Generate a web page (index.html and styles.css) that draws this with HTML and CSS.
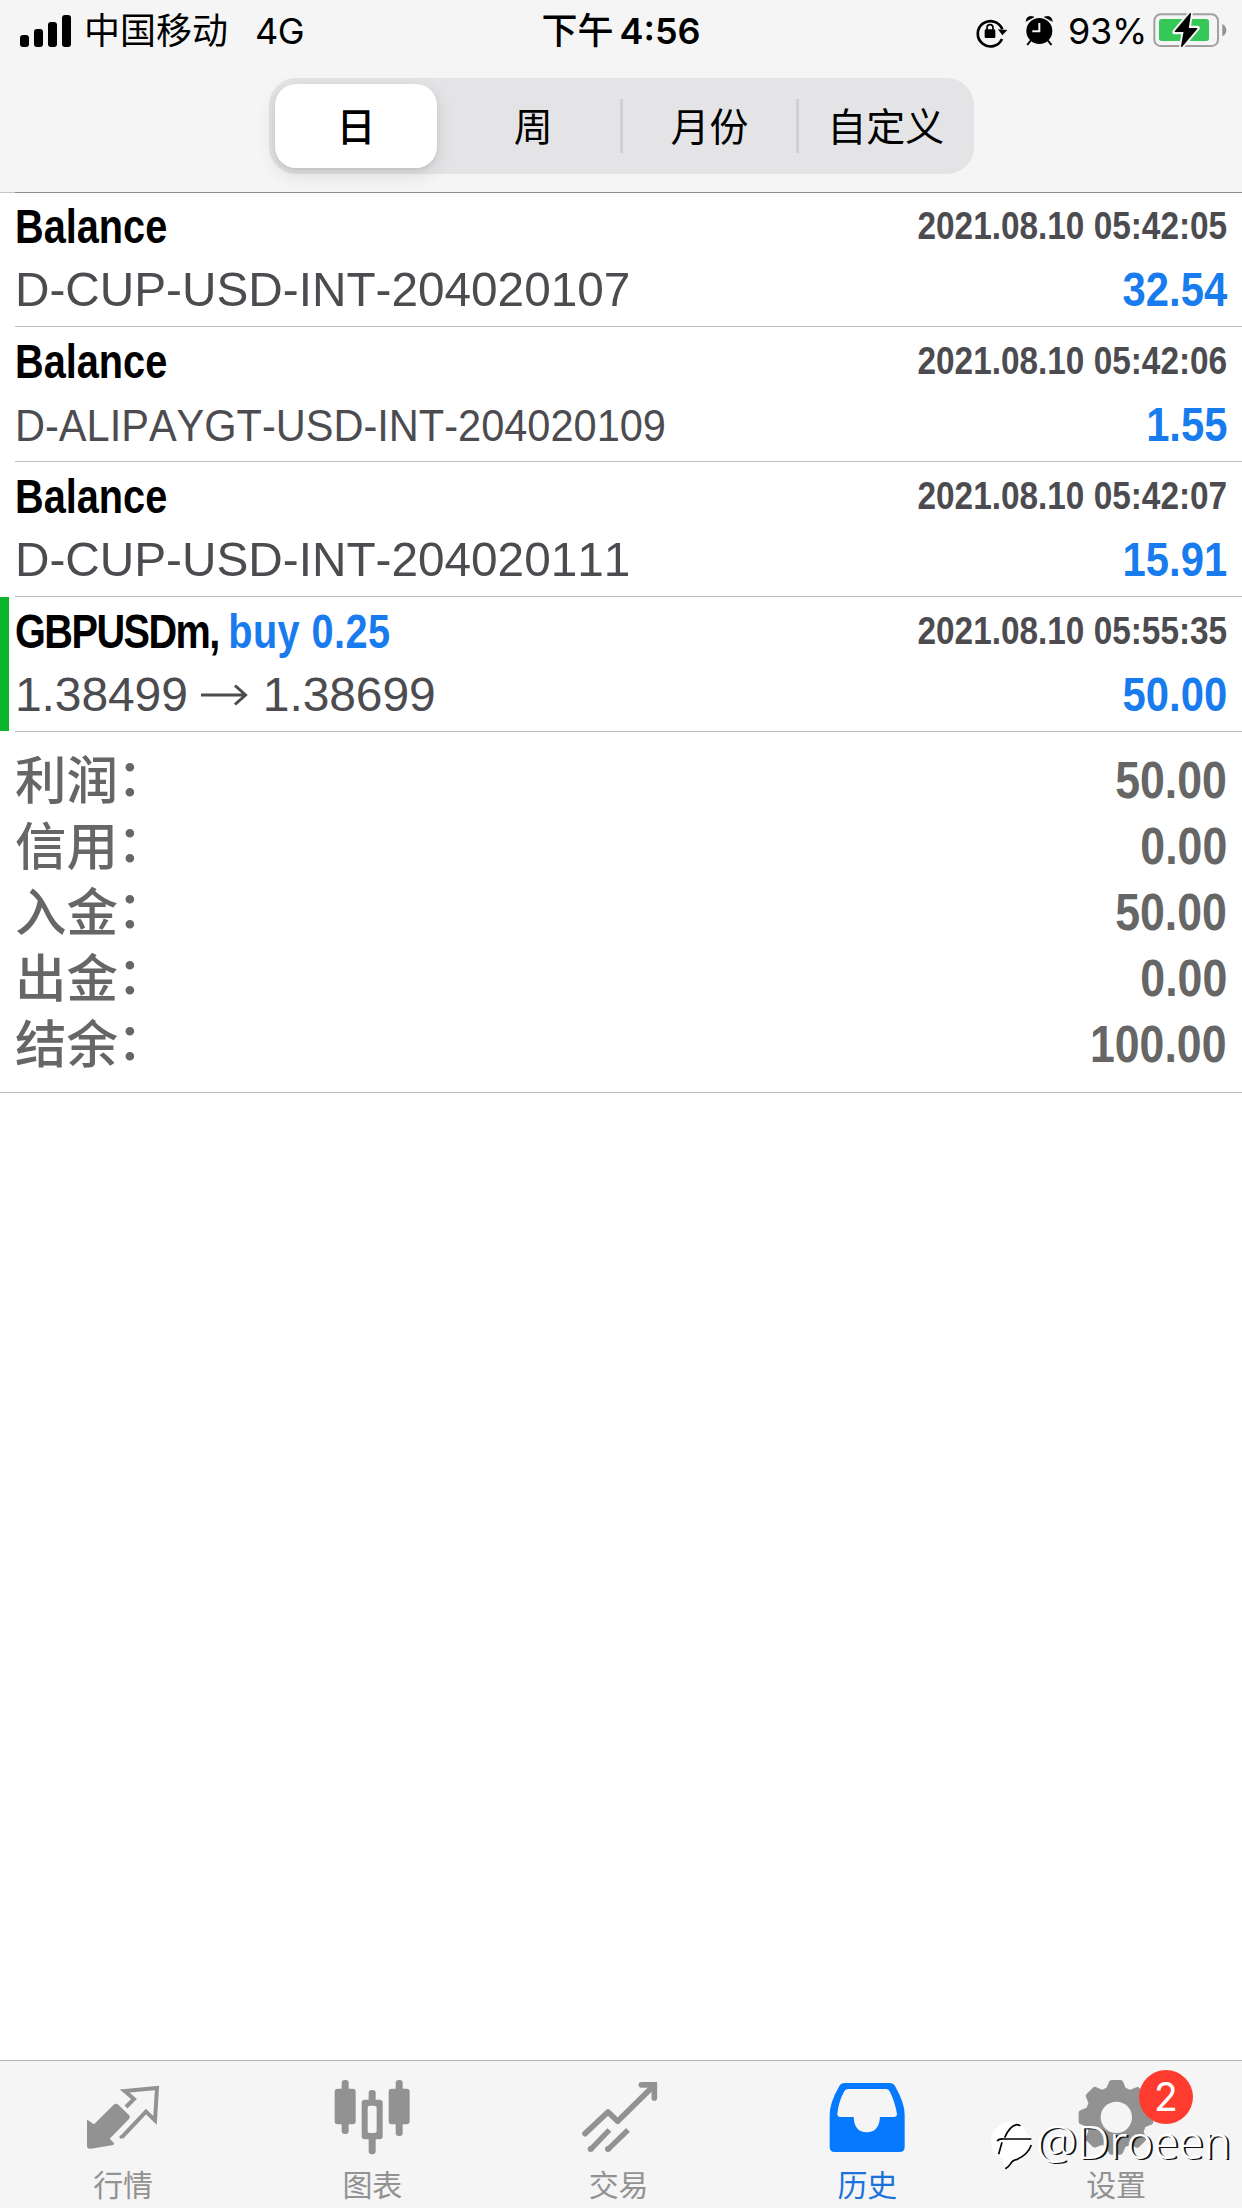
FILE: index.html
```html
<!DOCTYPE html>
<html lang="zh-CN">
<head>
<meta charset="utf-8">
<title>历史</title>
<link rel="stylesheet" href="styles.css">
</head>
<body>
<div class="screen">
  <header class="header">
    <div class="status">
      <div class="status-left">
        <svg class="signal" viewBox="0 0 51 32"><rect x="0" y="20" width="9" height="12" rx="3"/><rect x="14" y="14" width="9" height="18" rx="3"/><rect x="28" y="7" width="9" height="25" rx="3"/><rect x="42" y="0" width="9" height="32" rx="3"/></svg>
        <span class="carrier">中国移动</span>
        <span class="network">4G</span>
      </div>
      <div class="time">下午<span class="clock">4:56</span></div>
      <div class="status-right">
        <svg class="ic-lock" viewBox="405 39 99 108">
          <path d="M486 117A38 38 0 1 1 487 88" fill="none" stroke="#000" stroke-width="8"/>
          <path d="M474 88L502 90L487 106Z"/>
          <rect x="434" y="88" width="32" height="26" rx="4"/>
          <path d="M441 90V83a9 9 0 0 1 18 0V90" fill="none" stroke="#000" stroke-width="5"/>
        </svg>
        <svg class="ic-alarm" viewBox="555 39 84 108">
          <circle cx="598" cy="93" r="39"/>
          <path d="M558 64Q559 51 571 49L582 51Z M637 64Q636 51 624 49L613 51Z" stroke="#000" stroke-width="2" stroke-linejoin="round"/>
          <path d="M571 123L563 133M625 123L633 133" stroke="#000" stroke-width="6" stroke-linecap="round"/>
          <path d="M598 69V94H577" fill="none" stroke="#f5f5f5" stroke-width="6"/>
        </svg>
        <span class="percent">93%</span>
        <svg class="ic-battery" viewBox="939 39 222 108">
          <rect x="943" y="43" width="191" height="95" rx="19" fill="none" stroke="#a0a0a1" stroke-width="6"/>
          <path d="M1147 72q12 7 12 19t-12 18z" fill="#939394"/>
          <rect x="957" y="57" width="150" height="66" rx="8" fill="#35c859"/>
          <path d="M1052 38L1003 96H1031L1024 142L1073 84H1046Z" stroke="#f5f5f5" stroke-width="13" stroke-linejoin="round"/>
          <path d="M1051 41L1006 94H1033L1025 139L1070 86H1044Z" stroke="#000" stroke-width="4" stroke-linejoin="round"/>
        </svg>
      </div>
    </div>
    <nav class="segments">
      <span class="segment active">日</span>
      <span class="segment">周</span>
      <span class="segment split">月份</span>
      <span class="segment split">自定义</span>
    </nav>
  </header>

  <main class="list">
    <div class="row first">
      <span class="title">Balance</span><span class="date">2021.08.10 05:42:05</span>
      <span class="detail">D-CUP-USD-INT-204020107</span><span class="amount">32.54</span>
    </div>
    <div class="row">
      <span class="title">Balance</span><span class="date">2021.08.10 05:42:06</span>
      <span class="detail small">D-ALIPAYGT-USD-INT-204020109</span><span class="amount">1.55</span>
    </div>
    <div class="row">
      <span class="title">Balance</span><span class="date">2021.08.10 05:42:07</span>
      <span class="detail">D-CUP-USD-INT-204020111</span><span class="amount">15.91</span>
    </div>
    <div class="row trade">
      <span class="title"><span class="symbol">GBPUSDm, </span><span class="side">buy 0.25</span></span><span class="date">2021.08.10 05:55:35</span>
      <span class="prices">1.38499<svg class="arrow" viewBox="0 0 46 22"><path d="M0 11H44M34 1.5L44.5 11L34 20.5"/></svg>1.38699</span><span class="amount">50.00</span>
    </div>
    <section class="summary">
      <div class="sum"><span class="label">利润<span class="colon">：</span></span><span class="value">50.00</span></div>
      <div class="sum"><span class="label">信用<span class="colon">：</span></span><span class="value">0.00</span></div>
      <div class="sum"><span class="label">入金<span class="colon">：</span></span><span class="value">50.00</span></div>
      <div class="sum"><span class="label">出金<span class="colon">：</span></span><span class="value">0.00</span></div>
      <div class="sum"><span class="label">结余<span class="colon">：</span></span><span class="value">100.00</span></div>
    </section>
  </main>

  <footer class="tabs">
    <div class="tab">
      <svg class="tab-icon" viewBox="129 81 240 240">
        <path d="M141 212Q141 208 144 211L162 223L221 164Q228 158 235 164L267 195Q272 201 267 207L209 266L221 278Q224 284 216 286L152 296Q141 297 141 288Z"/>
        <path d="M258 171L282 147L254 123L351 114L345 211L318 185L245 262" fill="none" stroke="#929292" stroke-width="12"/>
        <circle cx="243" cy="261" r="5"/>
      </svg>
      <span class="tab-label">行情</span>
    </div>
    <div class="tab charts">
      <svg class="tab-icon" viewBox="877 81 240 240">
        <rect x="885" y="116" width="63" height="107" rx="9"/><rect x="906" y="90" width="21" height="162" rx="9"/>
        <rect x="1047" y="116" width="63" height="107" rx="9"/><rect x="1068" y="90" width="21" height="168" rx="9"/>
        <rect x="966" y="149" width="63" height="119" rx="9"/><rect x="987" y="120" width="21" height="193" rx="9"/>
        <rect x="984" y="167" width="27" height="82" rx="7" fill="#f5f5f5"/>
      </svg>
      <span class="tab-label">图表</span>
    </div>
    <div class="tab trading">
      <svg class="tab-icon" viewBox="116 81 240 240">
        <path d="M134 251L203 186L232 214L340 107" fill="none" stroke="#929292" stroke-width="17" stroke-linecap="round" stroke-linejoin="round"/>
        <path d="M303 104.500H342V144" fill="none" stroke="#929292" stroke-width="17" stroke-linecap="round"/>
        <path d="M151 298L207 240M203 298L263 240" fill="none" stroke="#929292" stroke-width="16"/>
        <circle cx="151" cy="297" r="9"/><circle cx="203" cy="297" r="9"/>
      </svg>
      <span class="tab-label">交易</span>
    </div>
    <div class="tab current">
      <svg class="tab-icon" viewBox="862 81 240 240">
        <path fill-rule="evenodd" d="M915 99H1050Q1061 99 1066 108Q1095 158 1095 195V291Q1095 306 1080 306H885Q870 306 870 291V195Q870 158 899 108Q904 99 915 99ZM925 117Q918 117 914 124Q896 156 893 192Q893 201 902 201H942Q944 247 981 247Q1018 247 1021 201H1062Q1072 201 1072 192Q1066 156 1050 124Q1046 117 1039 117Z"/>
      </svg>
      <span class="tab-label">历史</span>
    </div>
    <div class="tab">
      <svg class="tab-icon" viewBox="403 81 240 240">
        <defs><path id="tooth" d="M510 98H537L549 128H497Z" stroke="#929292" stroke-width="16" stroke-linejoin="round"/></defs>
        <circle cx="523" cy="202" r="93"/>
        <use href="#tooth"/><use href="#tooth" transform="rotate(45 523 202)"/><use href="#tooth" transform="rotate(90 523 202)"/><use href="#tooth" transform="rotate(135 523 202)"/><use href="#tooth" transform="rotate(180 523 202)"/><use href="#tooth" transform="rotate(225 523 202)"/><use href="#tooth" transform="rotate(270 523 202)"/><use href="#tooth" transform="rotate(315 523 202)"/>
        <circle cx="524" cy="202" r="47" fill="#f5f5f5"/>
      </svg>
      <span class="badge">2</span>
      <span class="tab-label">设置</span>
    </div>
    <div class="watermark">
      <svg class="mark" viewBox="141 206 135 156">
        <path d="M235 221A60 59 0 0 0 148 280Q150 312 180 324L190 354Q205 343 232 330Q268 312 268 268Z" fill="#fff"/>
        <path d="M165 272Q172 264 186 266H268M188 262Q202 228 224 223Q232 223 235 227M180 276L170 312" fill="none" stroke="#000" stroke-width="5"/>
        <path d="M268 284Q258 312 226 327Q210 330 206 340Q200 350 190 355" fill="none" stroke="#000" stroke-width="5"/>
      </svg>
      <span class="handle">@Droeen</span>
    </div>
  </footer>
</div>
</body>
</html>
```
FILE: styles.css
```css
* { box-sizing: border-box; }
body { margin: 0; background: #fff; }
svg { display: block; flex: none; overflow: visible; }

.screen {
  width: 1242px;
  height: 2208px;
  display: flex;
  flex-direction: column;
  font-family: Inter, "Noto Sans CJK SC", sans-serif;
  color: #000;
}

.header {
  height: 193px;
  background: #f5f5f5;
  border-bottom: 1px solid #c4c4c4;
}

.status {
  display: grid;
  grid-template-columns: 1fr auto 1fr;
  height: 62px;
  line-height: 63px;
  font-size: 36px;
  white-space: nowrap;
}
.status-left, .status-right { display: flex; align-items: center; }
.status-left { padding-left: 20px; }
.status-right { justify-content: flex-end; padding-right: 15px; }
.signal { width: 51px; height: 32px; margin: -2px 13px 0 0; }
.network { margin-left: 27px; letter-spacing: -0.5px; }
.time { font-weight: 500; }
.clock { font-weight: 600; margin-left: 6px; }
.ic-lock { width: 33px; height: 36px; margin: -1px 17px 0 0; }
.ic-alarm { width: 28px; height: 36px; margin: -1px 15px 0 0; }
.percent { margin-right: 6px; letter-spacing: -0.3px; }
.ic-battery { width: 74px; height: 36px; margin-top: -1px; }

.segments {
  display: grid;
  grid-template-columns: repeat(4, 1fr);
  width: 705px;
  height: 96px;
  margin: 16px 0 0 269px;
  border-radius: 27px;
  background: #e4e4e6;
  font-size: 39px;
}
.segment {
  display: flex;
  align-items: center;
  justify-content: center;
  padding-bottom: 5px;
}
.segment.active {
  margin: 6px 8px 6px 6px;
  border-radius: 21px;
  background: #fff;
  font-weight: 500;
  box-shadow: 0 6px 18px rgba(0, 0, 0, .12), 0 2px 4px rgba(0, 0, 0, .06);
}
.segment.split {
  margin-left: -2px;
  padding-left: 2px;
  background: linear-gradient(#cfcfd2, #cfcfd2) 0 50% / 3px 54px no-repeat;
}

.list {
  flex: 1;
  margin-top: -1px;
  font-family: "Liberation Sans", sans-serif;
  font-kerning: none;
}
.row {
  position: relative;
  display: grid;
  grid-template-columns: auto auto;
  grid-auto-rows: 60px;
  row-gap: 4px;
  align-content: end;
  justify-content: space-between;
  height: 135px;
  margin-left: 15px;
  padding: 0 15px 6px 0;
  border-bottom: 1px solid #bcbcbe;
  line-height: 60px;
  white-space: pre;
}
.row.first { border-top: 1px solid #8e8e8e; }
.row.trade::before {
  content: "";
  position: absolute;
  left: -15px;
  top: 0;
  bottom: 0;
  width: 9px;
  background: #0cb52b;
}
.title, .date, .amount, .value { font-weight: bold; }
.title {
  font-size: 49px;
  transform: scaleX(.81);
  transform-origin: left;
}
.symbol { letter-spacing: -1.9px; }
.side { color: #187bee; letter-spacing: .5px; }
.date {
  justify-self: end;
  font-size: 39px;
  color: #4c4c50;
  transform: scaleX(.855);
  transform-origin: right;
}
.detail {
  font-size: 48.500px;
  line-height: 58px;
  color: #4c4c50;
  transform: scaleX(.984);
  transform-origin: left;
}
.detail.small {
  font-size: 44px;
  line-height: 62px;
  transform: scaleX(.944);
}
.amount {
  justify-self: end;
  font-size: 48px;
  color: #187bee;
  transform: scaleX(.87);
  transform-origin: right;
}
.prices {
  display: flex;
  align-items: center;
  font-size: 48px;
  letter-spacing: -0.1px;
  color: #4c4c50;
}
.arrow { width: 46px; height: 22px; margin: 0 16px 0 13px; }
.arrow path { fill: none; stroke: #4c4c50; stroke-width: 3; }

.summary {
  padding: 15px;
  border-bottom: 1px solid #bcbcbe;
}
.sum {
  display: flex;
  justify-content: space-between;
  height: 66px;
  color: #666;
}
.label {
  font: 500 51.500px/59px "Noto Sans CJK SC", sans-serif;
}
.colon {
  display: inline-block;
  transform: translate(-1px, -3px);
}
.value {
  font-size: 51.500px;
  line-height: 66px;
  transform: scaleX(.867);
  transform-origin: right;
}

.tabs {
  position: relative;
  display: grid;
  grid-template-columns: repeat(5, 248.250px);
  height: 148px;
  padding-top: 16px;
  border-top: 1px solid #b2b2b2;
  background: #f5f5f5;
  color: #929292;
}
.tab {
  position: relative;
  display: flex;
  flex-direction: column;
  align-items: center;
  gap: 11px;
  margin: 0 1px 0 -1px;
  fill: #929292;
}
.tab.charts { margin: 0; }
.tab.trading { margin: 0 2px 0 -2px; }
.tab.current { margin: 0 1.5px 0 -1.5px; color: #1a73dc; fill: #067aff; }
.tab-icon { width: 80px; height: 80px; }
.tab-label { font-size: 30px; line-height: 35px; }
.badge {
  position: absolute;
  left: 147px;
  top: -7px;
  width: 54px;
  height: 54px;
  border-radius: 50%;
  background: #ff3b2f;
  color: #fff;
  font-size: 39px;
  line-height: 54px;
  text-align: center;
}
.watermark {
  position: absolute;
  left: 989px;
  top: 58px;
  display: flex;
  align-items: flex-start;
}
.mark { width: 45px; height: 52px; }
.handle {
  margin: -8px 0 0 2px;
  font: 300 46px/60px "Noto Sans", sans-serif;
  letter-spacing: -0.2px;
  color: #fff;
  text-shadow: 2px 1px 0 #111;
}
```
